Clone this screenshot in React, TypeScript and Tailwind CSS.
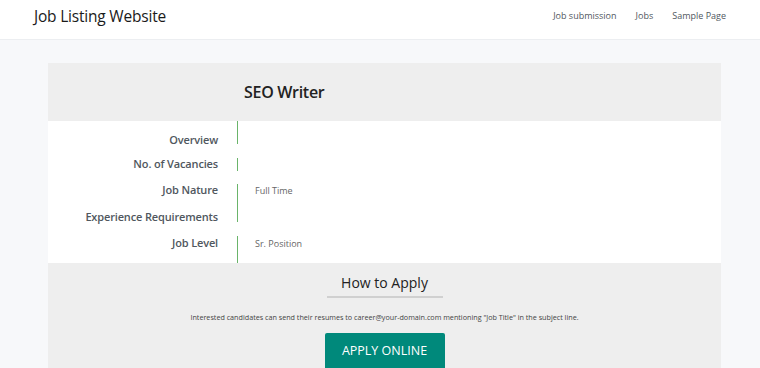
import React from 'react';

const font = { fontFamily: '"Open Sans", "Noto Sans", sans-serif' };

const App: React.FC = () => {
    return (
        <div className="min-h-screen bg-[#f7f8fa]" style={font}>
            {/* Header */}
            <header className="h-[40px] bg-white border-b border-[#eceef1] flex items-start justify-between pl-[34px] pr-[34px]">
                <div className="mt-[5px] text-[15.5px] leading-[22px] text-[#1a1a1a] tracking-[-0.2px]">Job Listing Website</div>
                <nav className="mt-[9px] flex items-center gap-[19px] text-[9px] leading-[14px] text-[#50575e]">
                    <span>Job submission</span>
                    <span>Jobs</span>
                    <span>Sample Page</span>
                </nav>
            </header>

            {/* Job card */}
            <div className="pt-[23px] pl-[48px]">
                <div className="w-[673px]">
                    <div className="h-[58px] bg-[#eeeeee] flex items-center pl-[196px]">
                        <h1 className="text-[16px] font-semibold text-[#222] tracking-[-0.3px]">SEO Writer</h1>
                    </div>

                    <div className="bg-white text-[11px] font-semibold text-[#50575e] tracking-[-0.15px]">
                        <div className="flex h-[27px]">
                            <div className="w-[170px] text-right mt-[11px] leading-[16px]">Overview</div>
                            <div className="ml-[19px] h-[23px] w-px bg-[#6ab46a]" />
                        </div>
                        <div className="flex h-[24px]">
                            <div className="w-[170px] text-right mt-[8px] leading-[16px]">No. of Vacancies</div>
                            <div className="ml-[19px] mt-[10px] h-[13px] w-px bg-[#6ab46a]" />
                        </div>
                        <div className="flex h-[53px]">
                            <div className="w-[170px] text-right mt-[10px] leading-[16px] flex flex-col gap-[11px]">
                                <span>Job Nature</span>
                                <span className="whitespace-nowrap">Experience Requirements</span>
                            </div>
                            <div className="ml-[19px] mt-[12px] h-[38px] w-px bg-[#6ab46a]" />
                            <span className="ml-[17px] mt-[12px] text-[9px] font-normal tracking-normal text-[#666] leading-[14px]">Full Time</span>
                        </div>
                        <div className="flex h-[38px]">
                            <div className="w-[170px] text-right mt-[10px] leading-[16px]">Job Level</div>
                            <div className="ml-[19px] mt-[11px] h-[27px] w-px bg-[#6ab46a]" />
                            <span className="ml-[17px] mt-[11px] text-[9px] font-normal tracking-normal text-[#666] leading-[16px]">Sr. Position</span>
                        </div>
                    </div>

                    <div className="bg-[#eeeeee] flex flex-col items-center pt-[10px] pb-[20px]">
                        <h2 className="text-[14px] text-[#222] leading-[20px] w-[116px] text-center pb-[3px] border-b-2 border-[#d0d0d0]">How to Apply</h2>
                        <p className="mt-[14px] text-[7.2px] text-[#444] leading-[10px]">
                            Interested candidates can send their resumes to career@your-domain.com mentioning "Job Title" in the subject line.
                        </p>
                        <button className="mt-[11px] w-[120px] h-[40px] bg-[#00897b] rounded-[2px] text-white text-[12.5px] pb-[4px]">
                            APPLY ONLINE
                        </button>
                    </div>
                </div>
            </div>
        </div>
    );
};

export default App;
